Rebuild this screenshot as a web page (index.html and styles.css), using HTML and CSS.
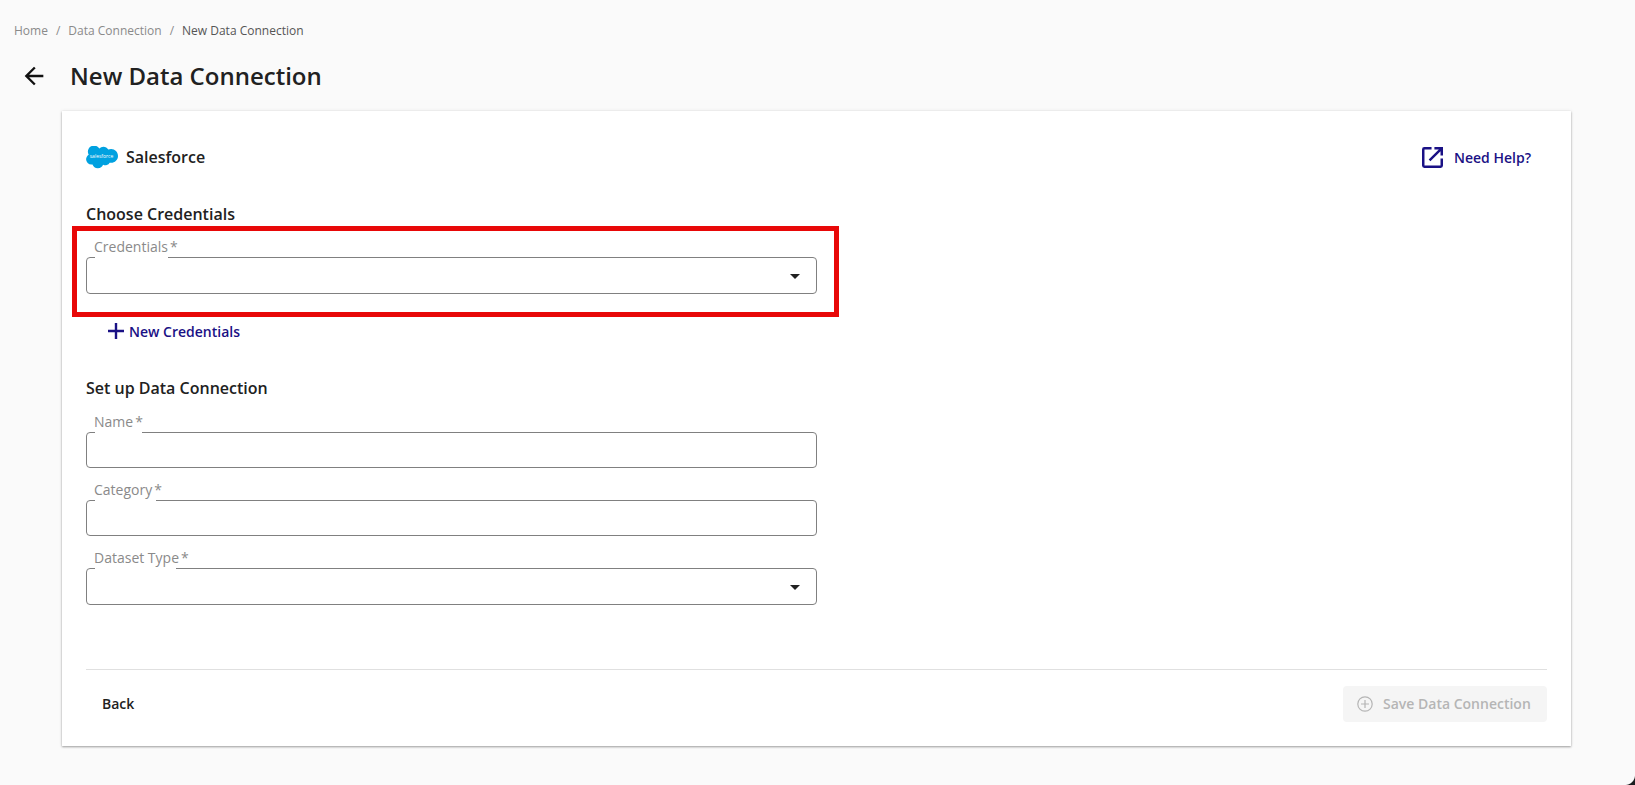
FILE: index.html
```html
<!DOCTYPE html>
<html lang="en">
<head>
    <meta charset="UTF-8">
    <title>New Data Connection</title>
    <link rel="stylesheet" href="styles.css">
</head>
<body>

    <nav class="breadcrumb">
        <a href="#">Home</a>
        <span class="sep">/</span>
        <a href="#">Data Connection</a>
        <span class="sep">/</span>
        <span class="current">New Data Connection</span>
    </nav>

    <header class="page-head">
        <svg class="back-arrow" viewBox="0 0 24 24"><path d="M20 11H7.830l5.590-5.590L12 4l-8 8 8 8 1.410-1.410L7.830 13H20v-2z"/></svg>
        <h1>New Data Connection</h1>
    </header>

    <main class="card">
        <div class="card-top">
            <div class="brand">
                <svg class="sf-logo" viewBox="0 0 32 23">
                    <path fill="#00a1e0" d="M13.300 2.600A5.600 5.600 0 0 1 17.400.8c2.100 0 3.900 1.100 4.900 2.800a6.700 6.700 0 0 1 2.800-.6c3.800 0 6.900 3.100 6.900 6.900s-3.100 6.900-6.900 6.900c-.5 0-.9 0-1.400-.1a5 5 0 0 1-6.600 2.100 5.700 5.700 0 0 1-10.600-.3c-.4.100-.7.100-1.100.1A5.300 5.300 0 0 1 .1 13.300c0-2 1.100-3.700 2.600-4.600a6.100 6.100 0 0 1 10.600-6.100z"/>
                    <text class="sf-word" x="15.500" y="12.300" text-anchor="middle">salesforce</text>
                </svg>
                <span class="brand-name">Salesforce</span>
            </div>
            <a class="help-link" href="#">
                <svg class="help-icon" viewBox="0 0 22 22"><path d="M2.500 0H10v2.600H2.600v16.800h16.800V12H22v7.500a2.500 2.500 0 0 1-2.500 2.500h-17A2.500 2.500 0 0 1 0 19.500v-17A2.500 2.500 0 0 1 2.500 0z"/><path d="M13 0h9v9h-2.600V4.400L8.800 15 7 13.200 17.600 2.600H13z"/></svg>
                Need Help?
            </a>
        </div>

        <h2 class="section-title">Choose Credentials</h2>
        <div class="highlight">
            <div class="field field-select">
                <label>Credentials<span class="req">*</span></label>
                <span class="notch notch-credentials"></span>
                <span class="caret"></span>
            </div>
        </div>
        <a class="new-cred" href="#">
            <svg class="plus-icon" viewBox="0 0 16 16"><path d="M6.800 0h2.400v6.800H16v2.400H9.200V16H6.800V9.200H0V6.800h6.800z"/></svg>
            New Credentials
        </a>

        <h2 class="section-title setup-title">Set up Data Connection</h2>
        <div class="field field-input">
            <label>Name<span class="req">*</span></label>
            <span class="notch notch-name"></span>
        </div>
        <div class="field field-input">
            <label>Category<span class="req">*</span></label>
            <span class="notch notch-category"></span>
        </div>
        <div class="field field-select">
            <label>Dataset Type<span class="req">*</span></label>
            <span class="notch notch-dataset"></span>
            <span class="caret"></span>
        </div>

        <footer class="card-foot">
            <button class="btn-back">Back</button>
            <button class="btn-save" disabled>
                <svg class="save-icon" viewBox="0 0 16 16"><circle cx="8" cy="8" r="7.200"/><path d="M8 4v8M4 8h8"/></svg>
                Save Data Connection
            </button>
        </footer>
    </main>

    <!-- rounded corner of the captured window -->
    <span class="window-corner"></span>

</body>
</html>
```

FILE: styles.css
```css
* {
    box-sizing: border-box;
}

html, body {
    height: 100%;
}

body {
    margin: 0;
    padding: 22px 64px 0 0;
    background-color: #fafafa;
    font-family: "Open Sans", "Noto Sans", sans-serif;
    color: #212121;
    overflow: hidden;
}

a {
    text-decoration: none;
}

.breadcrumb {
    display: flex;
    gap: 8px;
    height: 17px;
    padding-left: 14px;
    font-size: 12px;
    line-height: 17px;
    color: #8a8a8a;
}

.breadcrumb a {
    color: #8a8a8a;
}

.breadcrumb .current {
    color: #555;
}

.page-head {
    display: flex;
    align-items: center;
    height: 34px;
    margin-top: 20px;
    padding-left: 20px;
}

.back-arrow {
    width: 28px;
    height: 28px;
    margin-right: 22px;
    fill: #111;
}

h1 {
    margin: 0;
    font-size: 24px;
    font-weight: 600;
    line-height: 34px;
}

.card {
    width: 1509px;
    height: 635px;
    margin: 18px 0 0 62px;
    padding: 30px 24px 24px;
    background-color: #fff;
    box-shadow: 0 1px 2px rgba(0, 0, 0, 0.35), 0 0 4px rgba(0, 0, 0, 0.08);
    display: flex;
    flex-direction: column;
}

.card-top {
    display: flex;
    justify-content: space-between;
    align-items: center;
    height: 32px;
}

.brand {
    display: flex;
    align-items: center;
    gap: 8px;
}

.sf-logo {
    width: 32px;
    height: 23px;
}

.sf-word {
    font-size: 5px;
    fill: #fff;
}

.brand-name {
    font-size: 16px;
    font-weight: 600;
}

.help-link {
    display: flex;
    align-items: center;
    gap: 11px;
    padding-right: 16px;
    font-size: 14px;
    font-weight: 600;
    color: #1a1185;
}

.help-icon {
    width: 21px;
    height: 21px;
    fill: #1a1185;
}

.section-title {
    margin: 0;
    font-size: 16px;
    font-weight: 600;
    line-height: 22px;
}

.card-top + .section-title {
    margin-top: 30px;
}

.highlight {
    width: 767px;
    height: 91px;
    margin: 1px 0 0 -14px;
    padding: 26px 0 0 14px;
    border: 5px solid #e80808;
}

.highlight .field {
    margin: 0 0 0 -5px;
}

.field {
    position: relative;
    width: 731px;
    border: 1px solid #808080;
    border-radius: 4px;
    background-color: #fff;
}

.field-select {
    height: 37px;
}

.field-input {
    height: 36px;
    margin-bottom: 32px;
}

.field label {
    position: absolute;
    left: 7px;
    top: -21px;
    font-size: 14px;
    line-height: 19px;
    color: #8a8a8a;
    white-space: nowrap;
}

.req {
    margin-left: 2px;
}

/* gap in the top border behind the label */
.notch {
    position: absolute;
    left: 8px;
    top: -1px;
    height: 1px;
    background-color: #fff;
}

.notch-credentials {
    width: 73px;
}

.notch-name {
    width: 47px;
}

.notch-category {
    width: 61px;
}

.notch-dataset {
    width: 81px;
}

.caret {
    position: absolute;
    right: 16px;
    top: 16px;
    width: 0;
    height: 0;
    border-left: 5.500px solid transparent;
    border-right: 5.500px solid transparent;
    border-top: 5.500px solid #212121;
}

.new-cred {
    display: flex;
    align-items: center;
    gap: 5px;
    margin: 4px 0 0 22px;
    height: 20px;
    font-size: 14px;
    font-weight: 600;
    color: #1a1185;
}

.plus-icon {
    width: 16px;
    height: 16px;
    fill: #1a1185;
}

.setup-title {
    margin-top: 36px;
    margin-bottom: 33px;
}

.card-foot {
    display: flex;
    justify-content: space-between;
    align-items: center;
    margin-top: auto;
    margin-bottom: 0;
    padding-top: 16px;
    border-top: 1px solid #e0e0e0;
}

button {
    font-family: inherit;
    font-size: 14px;
    font-weight: 600;
    border: none;
    background: none;
    height: 36px;
    padding-bottom: 2px;
}

.btn-back {
    padding-left: 16px;
    padding-right: 16px;
    color: #212121;
}

.btn-save {
    display: flex;
    align-items: center;
    gap: 10px;
    width: 204px;
    padding-left: 14px;
    padding-right: 0;
    background-color: #f5f5f5;
    border-radius: 4px;
    color: #b5b5b5;
    white-space: nowrap;
}

.save-icon {
    width: 16px;
    height: 16px;
    fill: none;
    stroke: #b5b5b5;
    stroke-width: 1.200;
}

.window-corner {
    position: fixed;
    right: 0;
    bottom: 0;
    width: 10px;
    height: 10px;
    background: radial-gradient(circle at 0 0, transparent 9.500px, #1b1f20 10.500px);
}
```
